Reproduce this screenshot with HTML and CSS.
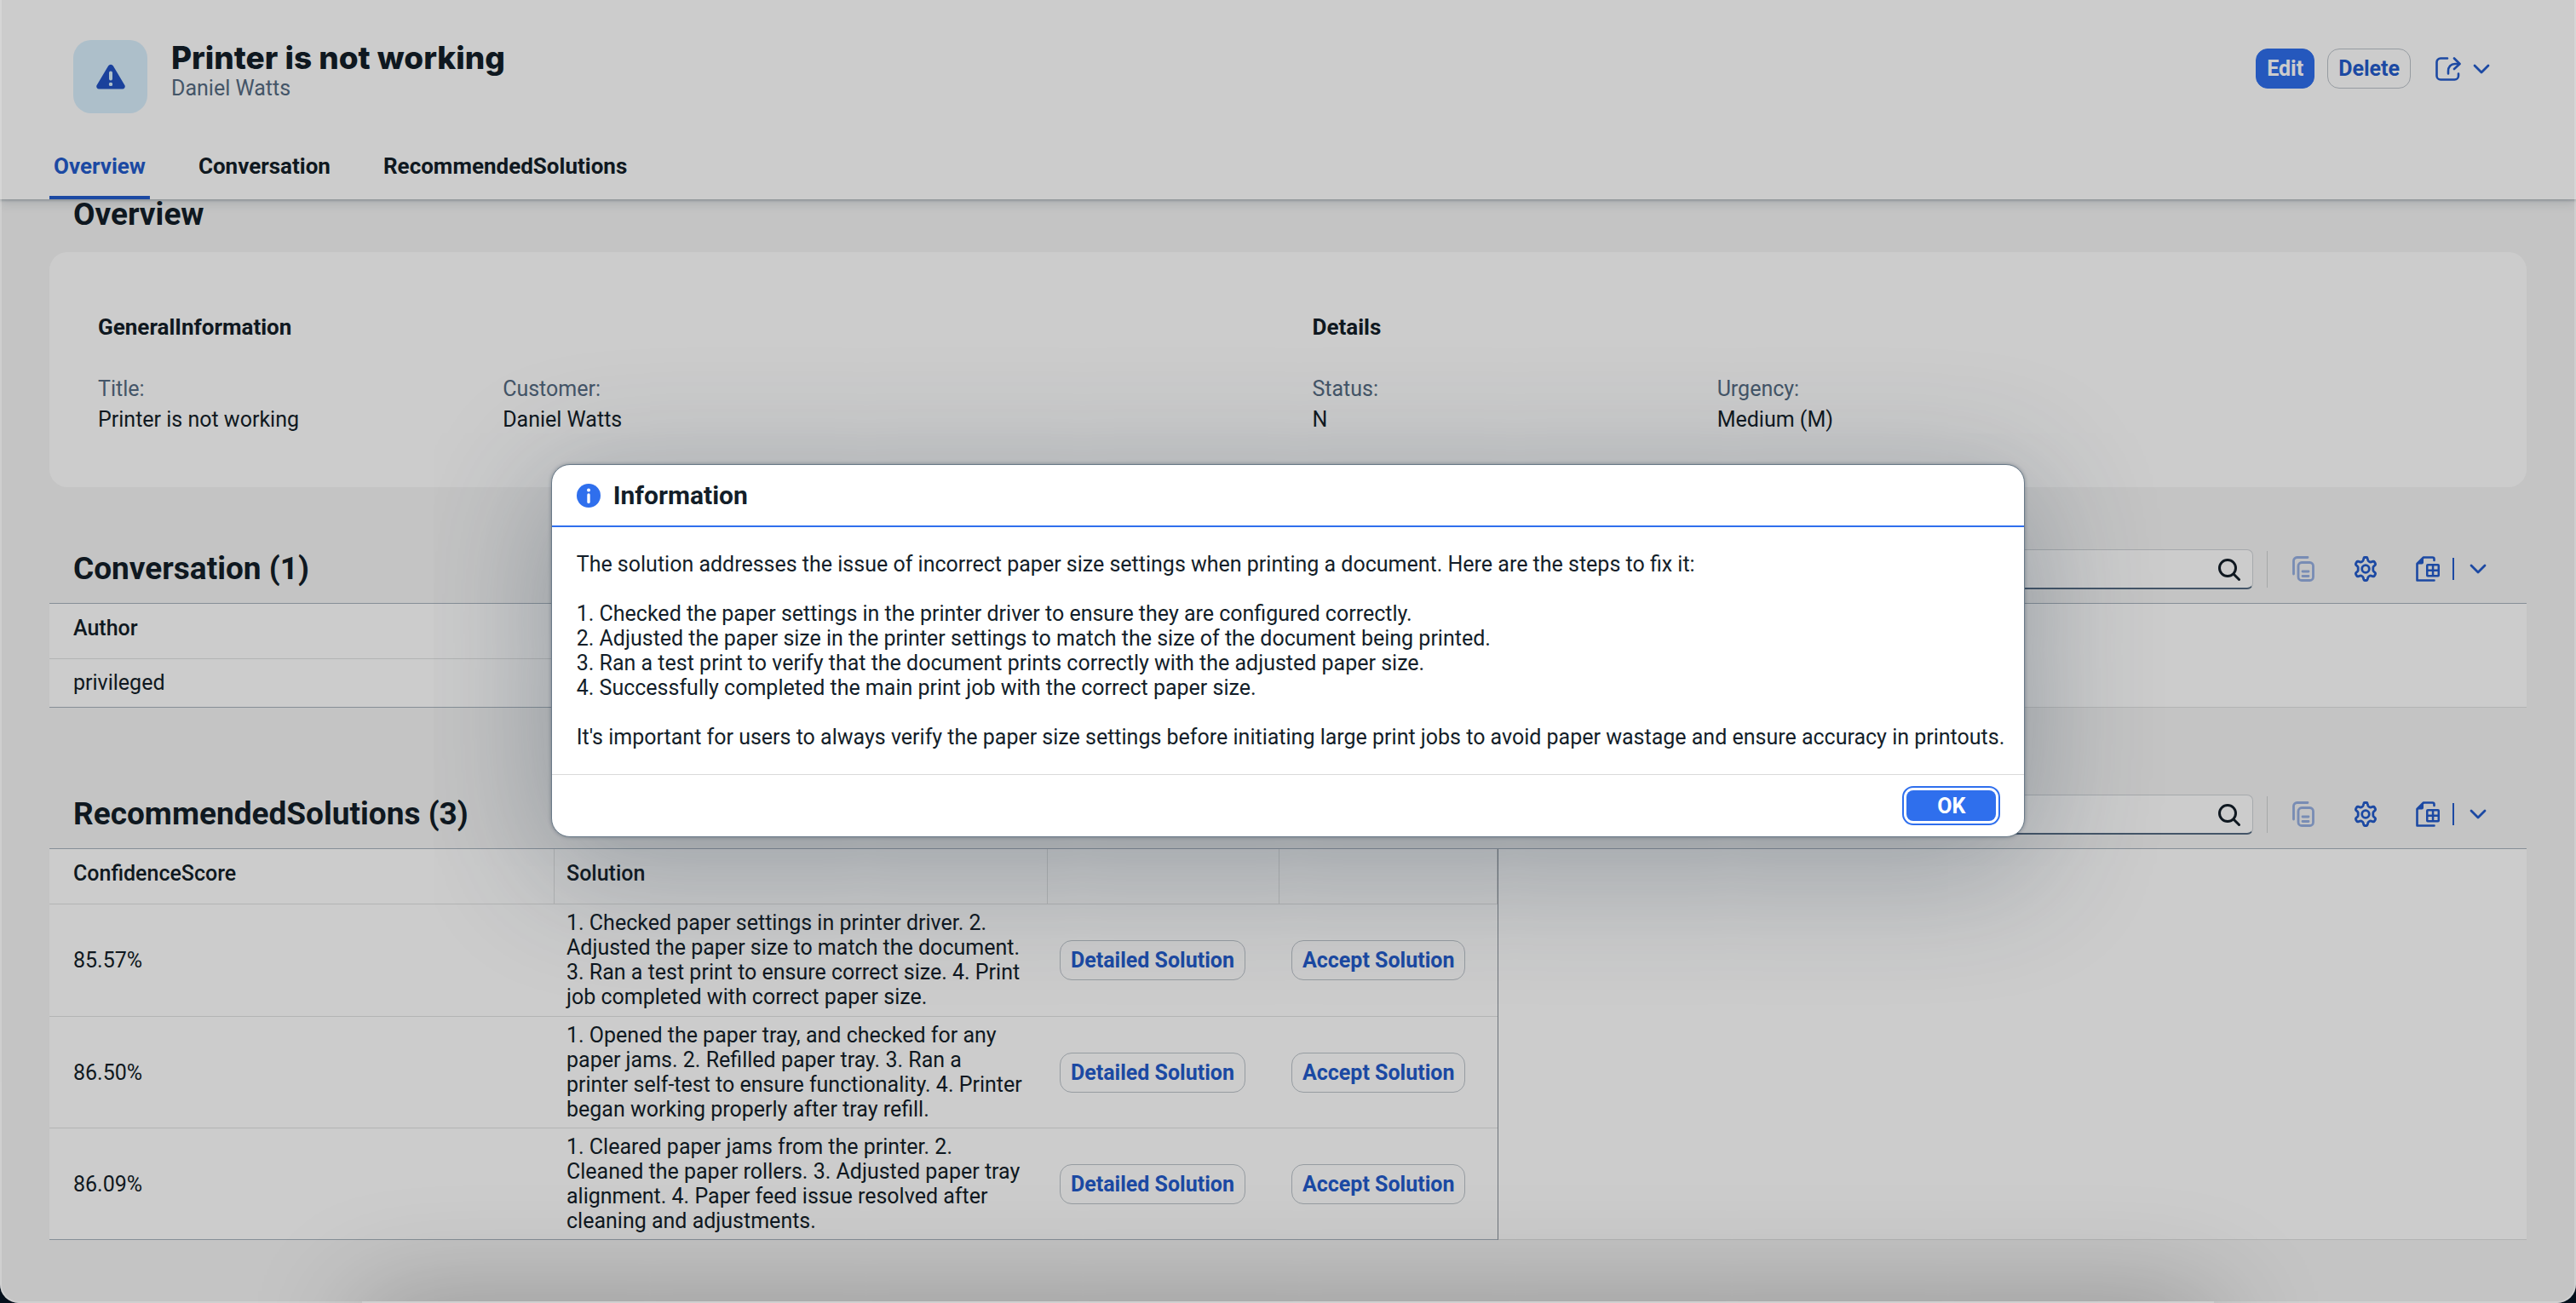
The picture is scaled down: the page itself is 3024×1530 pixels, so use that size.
FILE: index.html
```html
<!DOCTYPE html>
<html lang="en">
<head>
<meta charset="utf-8">
<meta name="viewport" content="width=device-width, initial-scale=1">
<title>Printer is not working</title>
<link rel="stylesheet" href="styles.css">
</head>
<body>
<svg class="sprite" aria-hidden="true">
  <symbol id="i-search" viewBox="0 0 28 28"><g fill="none" stroke="currentColor" stroke-width="3" stroke-linecap="round"><circle cx="12" cy="12" r="9.5"/><path d="M19 19l6.500 6.500"/></g></symbol>
  <symbol id="i-copy" viewBox="0 0 28 30"><g fill="none" stroke="currentColor" stroke-width="2.800" stroke-linecap="round" stroke-linejoin="round"><path d="M2.500 21V5.500a4 4 0 0 1 4-4H19"/><rect x="8" y="7.500" width="17.500" height="21" rx="4"/><path d="M13 18h7M13 23.500h7"/></g></symbol>
  <symbol id="i-gear" viewBox="0 0 28 30"><g fill="none" stroke="currentColor" stroke-width="2.800" stroke-linejoin="round"><path d="M12.800 1.500h2.400q.8 0 1 1l.6 2.300q.3 1 1.200 1.500l.6.400q.9.500 1.900.2l2.300-.7q1-.3 1.500.5l1.200 2.100q.4.900-.3 1.600l-1.700 1.700q-.7.700-.7 1.700v2.400q0 1 .7 1.700l1.700 1.700q.7.700.3 1.600l-1.200 2.100q-.5.800-1.500.5l-2.300-.7q-1-.3-1.900.2l-.6.400q-.9.500-1.200 1.500l-.6 2.300q-.2 1-1 1h-2.400q-.8 0-1-1l-.6-2.300q-.3-1-1.200-1.500l-.6-.4q-.9-.5-1.900-.2l-2.300.7q-1 .3-1.500-.5l-1.200-2.100q-.4-.9.300-1.600l1.700-1.700q.7-.7.700-1.700v-2.400q0-1-.7-1.700l-1.700-1.700q-.7-.7-.3-1.600l1.200-2.100q.5-.8 1.500-.5l2.300.7q1 .3 1.900-.2l.6-.4q.9-.5 1.200-1.500l.6-2.300q.2-1 1-1z"/><circle cx="14" cy="15" r="4.300"/></g></symbol>
  <symbol id="i-export" viewBox="0 0 28 30"><g fill="none" stroke="currentColor" stroke-width="2.600" stroke-linecap="round" stroke-linejoin="round"><path d="M21.500 28.500H1.500V9l7.500-7.500h10.500a2 2 0 0 1 2 2v1.500"/></g><path d="M1 9.500L9 1v6.500a2 2 0 0 1-2 2z" fill="currentColor"/><path fill-rule="evenodd" fill="currentColor" d="M14 9h12a2 2 0 0 1 2 2v11.500a2 2 0 0 1-2 2H14a2 2 0 0 1-2-2V11a2 2 0 0 1 2-2zM14.500 11.500v4h4.300v-4zM21.300 11.500v4h4.200v-4zM14.500 18v4h4.300v-4zM21.300 18v4h4.200v-4z"/></symbol>
  <symbol id="i-chevron" viewBox="0 0 20 14"><path d="M2 3l8 8 8-8" fill="none" stroke="currentColor" stroke-width="2.800" stroke-linecap="round" stroke-linejoin="round"/></symbol>
  <symbol id="i-share" viewBox="0 0 30 28"><g fill="none" stroke="currentColor" stroke-width="2.600" stroke-linecap="round" stroke-linejoin="round"><path d="M14 1.500H6a4.500 4.500 0 0 0-4.500 4.500v16a4.500 4.500 0 0 0 4.500 4.500h16.500a4.500 4.500 0 0 0 4.500-4.500V19.500"/><path d="M15 19.500v-3c0-5 3-8.500 8-8.500h5"/><path d="M22 1.500L28.500 8 22 14"/></g></symbol>
</svg>

<div class="window">
  <header class="page-header">
    <div class="title-row">
      <div class="avatar">
        <svg width="34" height="30" viewBox="0 0 34 30" aria-hidden="true"><path fill="currentColor" fill-rule="evenodd" d="M14.200 2.200a3.300 3.300 0 0 1 5.600 0l13.400 22.600a3 3 0 0 1-2.600 4.700H3.400a3 3 0 0 1-2.600-4.700zM15 10.500v7a2 2 0 0 0 4 0v-7a2 2 0 0 0-4 0zM17 21.700a2.200 2.200 0 1 0 0 4.400 2.200 2.200 0 0 0 0-4.400z"/></svg>
      </div>
      <div class="titles">
        <h1>Printer is not working</h1>
        <p>Daniel Watts</p>
      </div>
      <div class="actions">
        <button class="btn btn-primary" type="button">Edit</button>
        <button class="btn" type="button">Delete</button>
        <button class="icon-btn share" type="button" aria-label="Share"><svg width="30" height="28"><use href="#i-share"/></svg><svg width="20" height="14"><use href="#i-chevron"/></svg></button>
      </div>
    </div>
    <nav class="tabs">
      <a class="active" href="#overview">Overview</a>
      <a href="#conversation">Conversation</a>
      <a href="#solutions">RecommendedSolutions</a>
    </nav>
  </header>

  <main>
    <section id="overview">
      <h2>Overview</h2>
      <div class="card">
        <div class="group">
          <h3>GeneralInformation</h3>
          <dl>
            <div><dt>Title:</dt><dd>Printer is not working</dd></div>
            <div><dt>Customer:</dt><dd>Daniel Watts</dd></div>
          </dl>
        </div>
        <div class="group">
          <h3>Details</h3>
          <dl>
            <div><dt>Status:</dt><dd>N</dd></div>
            <div><dt>Urgency:</dt><dd>Medium (M)</dd></div>
          </dl>
        </div>
      </div>
    </section>

    <section id="conversation" class="list">
      <div class="toolbar">
        <h2>Conversation (1)</h2>
        <div class="search"><input type="search" aria-label="Search conversation"><svg width="28" height="28"><use href="#i-search"/></svg></div>
        <span class="rule"></span>
        <button class="icon-btn" type="button" disabled aria-label="Copy"><svg width="28" height="30"><use href="#i-copy"/></svg></button>
        <button class="icon-btn" type="button" aria-label="Settings"><svg width="28" height="30"><use href="#i-gear"/></svg></button>
        <button class="icon-btn" type="button" aria-label="Export"><svg width="28" height="30"><use href="#i-export"/></svg></button>
        <button class="icon-btn more" type="button" aria-label="Export options"><svg width="20" height="14"><use href="#i-chevron"/></svg></button>
      </div>
      <div class="table-wrap">
        <table>
          <thead><tr><th>Author</th></tr></thead>
          <tbody><tr><td>privileged</td></tr></tbody>
        </table>
      </div>
    </section>

    <section id="solutions" class="list">
      <div class="toolbar">
        <h2>RecommendedSolutions (3)</h2>
        <div class="search"><input type="search" aria-label="Search solutions"><svg width="28" height="28"><use href="#i-search"/></svg></div>
        <span class="rule"></span>
        <button class="icon-btn" type="button" disabled aria-label="Copy"><svg width="28" height="30"><use href="#i-copy"/></svg></button>
        <button class="icon-btn" type="button" aria-label="Settings"><svg width="28" height="30"><use href="#i-gear"/></svg></button>
        <button class="icon-btn" type="button" aria-label="Export"><svg width="28" height="30"><use href="#i-export"/></svg></button>
        <button class="icon-btn more" type="button" aria-label="Export options"><svg width="20" height="14"><use href="#i-chevron"/></svg></button>
      </div>
      <div class="table-wrap">
        <table>
          <colgroup><col class="c-score"><col class="c-text"><col class="c-detail"><col class="c-accept"></colgroup>
          <thead><tr><th>ConfidenceScore</th><th>Solution</th><th></th><th></th></tr></thead>
          <tbody>
            <tr><td>85.57%</td><td class="text">1. Checked paper settings in printer driver. 2. Adjusted the paper size to match the document. 3. Ran a test print to ensure correct size. 4. Print job completed with correct paper size.</td><td><button class="btn" type="button">Detailed Solution</button></td><td><button class="btn" type="button">Accept Solution</button></td></tr>
            <tr><td>86.50%</td><td class="text">1. Opened the paper tray, and checked for any paper jams. 2. Refilled paper tray. 3. Ran a printer self-test to ensure functionality. 4. Printer began working properly after tray refill.</td><td><button class="btn" type="button">Detailed Solution</button></td><td><button class="btn" type="button">Accept Solution</button></td></tr>
            <tr><td>86.09%</td><td class="text">1. Cleared paper jams from the printer. 2. Cleaned the paper rollers. 3. Adjusted paper tray alignment. 4. Paper feed issue resolved after cleaning and adjustments.</td><td><button class="btn" type="button">Detailed Solution</button></td><td><button class="btn" type="button">Accept Solution</button></td></tr>
          </tbody>
        </table>
      </div>
    </section>
  </main>

  <div class="overlay">
    <dialog open aria-labelledby="dlg-title">
      <header>
        <svg width="28" height="28" viewBox="0 0 28 28" aria-hidden="true"><circle cx="14" cy="14" r="14" fill="#2f6fed"/><circle cx="14" cy="7.500" r="2" fill="#fff"/><path d="M14 13v8.500" stroke="#fff" stroke-width="3.400" stroke-linecap="round"/></svg>
        <h2 id="dlg-title">Information</h2>
      </header>
      <div class="message">
        <p>The solution addresses the issue of incorrect paper size settings when printing a document. Here are the steps to fix it:</p>
        <p>1. Checked the paper settings in the printer driver to ensure they are configured correctly.<br>2. Adjusted the paper size in the printer settings to match the size of the document being printed.<br>3. Ran a test print to verify that the document prints correctly with the adjusted paper size.<br>4. Successfully completed the main print job with the correct paper size.</p>
        <p>It's important for users to always verify the paper size settings before initiating large print jobs to avoid paper wastage and ensure accuracy in printouts.</p>
      </div>
      <footer><button class="ok" type="button"><span>OK</span></button></footer>
    </dialog>
  </div>
</div>
</body>
</html>
```

FILE: styles.css
```css
:root {
  --ink: #131e29;
  --muted: #556b82;
  --link: #245ccc;
  --accent: #2f6fed;
  --line: #e0e1e2;
  --strong-line: #a8b3bd;
  --gap: 29px;
}

* { box-sizing: border-box; }

html, body { margin: 0; }

body {
  background: #05101c;
  color: var(--ink);
  font: 25px/29px Roboto, "Noto Sans", sans-serif;
}

h1, h2, h3, p, dl, dd { margin: 0; }

button, input { font: inherit; }

.sprite { position: absolute; width: 0; height: 0; }

.window {
  position: relative;
  min-height: 100vh;
  overflow: hidden;
  border-radius: 0 0 22px 22px;
  background: #f5f5f5;
}

/* Page header */
.page-header {
  position: relative;
  padding: 47px 87px 0 58px;
  background: #fff;
  box-shadow: 0 2px 2px rgba(34, 53, 72, .2), 0 4px 12px rgba(34, 53, 72, .16);
}

.title-row {
  display: flex;
  align-items: flex-start;
  padding-left: 28px;
}

.avatar {
  display: grid;
  place-items: center;
  width: 87px;
  height: 86px;
  border-radius: 21px;
  background: #d9effd;
  color: #2152c4;
}

.titles { flex: 1; padding-left: 28px; }

h1 { font: 800 37px/42px Inter, Roboto, sans-serif; }

.titles p { color: var(--muted); }

.actions { display: flex; align-items: center; gap: 15px; padding-top: 10px; }

.btn {
  height: 47px;
  padding: 0 12px;
  border: 1px solid #bcc3ca;
  border-radius: 14px;
  background: #fff;
  color: var(--link);
  font-weight: 700;
  white-space: nowrap;
}

.btn-primary { border-color: var(--accent); background: var(--accent); color: #fff; }

.icon-btn {
  display: grid;
  place-items: center;
  width: 58px;
  height: 47px;
  padding: 0;
  border: 0;
  background: none;
  color: var(--link);
}

.icon-btn:disabled { opacity: .45; }

.share { display: flex; align-items: center; justify-content: center; gap: 14px; width: 92px; }

.tabs { display: flex; gap: 52px; margin-top: 45px; }

.tabs a {
  height: 56px;
  padding: 3px 5px 0;
  color: var(--ink);
  font-size: 26px;
  font-weight: 700;
  line-height: 29px;
  text-decoration: none;
}

.tabs .active {
  background: linear-gradient(var(--link), var(--link)) bottom / 100% 4px no-repeat;
  color: var(--link);
}

/* Sections */
main { padding: 0 58px 40px; }

section > h2, .toolbar h2 { font-size: 37px; line-height: 36px; font-weight: 700; }

section > h2 { padding: 0 28px 26px; }

.card {
  display: grid;
  grid-template-columns: 1fr 1fr;
  padding: 74px 0 61px 57px;
  border-radius: 21px;
  background: #fff;
}

.group h3 { font-size: 26px; line-height: 29px; font-weight: 700; }

dl { display: grid; grid-template-columns: repeat(3, 1fr); padding-top: 40px; }

dt { color: var(--muted); }

dt, dd { line-height: 36px; }

.list { padding: 58px 0 29px; }

.toolbar {
  display: flex;
  align-items: center;
  height: 78px;
  padding: 0 29px 2px 28px;
}

.toolbar h2 { flex: 1; }

.search { position: relative; display: flex; width: 546px; }

.search input {
  width: 100%;
  height: 47px;
  padding: 0 60px 0 15px;
  border: 1px solid #d0d4d8;
  border-bottom: 2px solid #556b82;
  border-radius: 7px;
  background: #fff;
}

.search svg { position: absolute; right: 14px; top: 10px; }

.rule { width: 1px; height: 43px; margin: 0 5px 0 16px; background: #d0d2d4; }

.toolbar .icon-btn { width: 73px; }

.toolbar .more { width: 58px; height: 26px; border-left: 2px solid var(--link); margin-left: -7px; }

.table-wrap {
  border-top: 1px solid var(--strong-line);
  border-bottom: 1px solid var(--line);
  background: #fff;
}

table {
  width: 1701px;
  max-width: 100%;
  margin-bottom: -1px;
  border-right: 1px solid #8a929a;
  border-bottom: 1px solid var(--strong-line);
  border-collapse: separate;
  border-spacing: 0;
  table-layout: fixed;
}

.c-score { width: 593px; }
.c-text { width: 579px; }
.c-detail { width: 272px; }

th, td { padding: 7px 14px 8px; text-align: left; }

th:first-child, td:first-child { padding-left: 28px; }

th {
  height: 65px;
  padding-bottom: 14px;
  border-right: 1px solid var(--line);
  border-bottom: 1px solid var(--line);
  font-weight: 500;
}

td { height: 56px; }

td.text { padding-right: 23px; }

tr + tr td { padding-bottom: 7px; border-top: 1px solid var(--line); }

/* Modal message */
.overlay {
  position: absolute;
  inset: 0;
  display: flex;
  align-items: center;
  justify-content: center;
  border: 2px solid rgba(255, 255, 255, .2);
  border-top: 0;
  border-radius: inherit;
  background: rgba(0, 0, 0, .2);
}

.overlay::after {
  content: "";
  position: absolute;
  top: 100%;
  left: 14%;
  right: 14%;
  height: 120px;
  box-shadow: 0 0 130px rgba(0, 0, 0, .26);
}

dialog {
  position: static;
  margin: 0;
  padding: 0;
  border: 1px solid #6a7a88;
  border-radius: 22px;
  background: #fff;
  color: var(--ink);
  box-shadow: 0 0 4px rgba(34, 53, 72, .4), 0 30px 150px 10px rgba(34, 53, 72, .3);
}

dialog header {
  display: flex;
  align-items: center;
  gap: 15px;
  height: 73px;
  padding: 0 var(--gap);
  border-bottom: 2px solid var(--accent);
}

dialog h2 { font-size: 30px; line-height: 36px; font-weight: 700; }

.message { padding: var(--gap) 23px var(--gap) var(--gap); }

.message p + p { margin-top: 29px; }

dialog footer {
  display: flex;
  align-items: center;
  justify-content: flex-end;
  height: 73px;
  padding: 0 28px;
  border-top: 1px solid #d9d9d9;
}

.ok {
  width: 115px;
  height: 46px;
  padding: 3px;
  border: 2px solid var(--accent);
  border-radius: 13px;
  background: #fff;
  color: #fff;
  font-weight: 700;
}

.ok span { display: grid; place-items: center; height: 36px; border-radius: 8px; background: var(--accent); }
```
